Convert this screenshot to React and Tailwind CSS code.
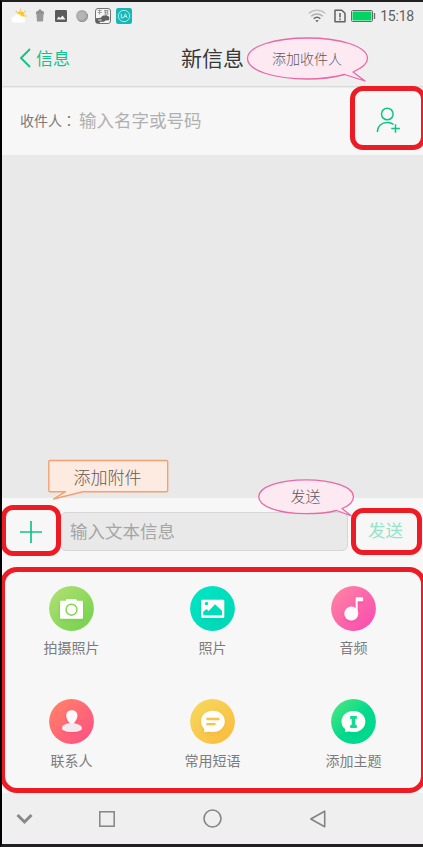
import React from "react";

function StatusBar() {
  return (
    <div className="flex h-[28px] items-center justify-between pl-[9px] pr-[9px]">
      <div className="flex items-center">
        <svg className="h-4 w-4" viewBox="0 0 16 16">
          <g stroke="#fbc02d" strokeWidth="1.2">
            <path d="M9.5 .8V2.6M4.8 3l1.1 1.1M14.5 3l-1.2 1.1M15.8 8h-1.5" />
          </g>
          <circle cx="9.8" cy="7" r="3.8" fill="#fcc62f" />
          <path d="M3.6 14.5a3 3 0 0 1-.4-6 4 4 0 0 1 7.3-.2 3.2 3.2 0 0 1 1.5 6.2z" fill="#fff" />
        </svg>
        <svg className="ml-[8px] h-[14px] w-[10px]" viewBox="0 0 10 14">
          <path d="M1 3.6a2 2 0 0 1 1.5-1.7h.8a1.7 1.7 0 0 1 3.4 0h.8A2 2 0 0 1 9 3.600v1.300H1z" fill="#909090" />
          <path d="M1.400 4.800h7.200L8 12.600H2z" fill="#999" />
        </svg>
        <svg className="ml-[10px] h-3 w-3" viewBox="0 0 12 12">
          <rect width="12" height="12" rx="1.2" fill="#5b5b5b" />
          <path d="M1.7 9.5l2-3 1.5 1.6 2.3-2.6 3 4z" fill="#f2f2f2" />
        </svg>
        <svg className="ml-[9px] h-3 w-3" viewBox="0 0 12 12">
          <circle cx="6" cy="6" r="5.9" fill="#a6a6a6" />
          <circle cx="5.3" cy="5.7" r="4" fill="#b5b5b5" />
          <path d="M11.4 4a5.7 5.7 0 0 1-8 7.1" fill="none" stroke="#909090" strokeWidth="1" />
        </svg>
        <svg className="ml-[7px] h-4 w-4" viewBox="0 0 16 16">
          <rect x=".5" y=".5" width="15" height="15" rx="2.5" fill="#f4f4f4" stroke="#727272" />
          <path d="M2.8 2.5h4M4.5 1.5v5M2.7 4.5h4.2M9 2.5h4.2M9.4 4.2h3.7M9.6 6.2h3.6M10.3 2.2v4M12.7 2.2v4" stroke="#8c8c8c" strokeWidth=".8" />
          <path d="M1 10.2l5-.5c1.5-3 5.8-3.2 8.300-.7l-.2 3.200-3.700.4-1.400 1.200H5.200L4.400 15H1z" fill="#606060" />
          <path d="M3.2 12h3.4" stroke="#eee" />
        </svg>
        <svg className="ml-[5px] h-4 w-4" viewBox="0 0 16 16">
          <rect width="16" height="16" rx="2.2" fill="#18b7b7" />
          <circle cx="8" cy="8" r="5.7" fill="none" stroke="#bcecec" strokeWidth=".9" />
          <path d="M5.3 5.8v4h2.3l1.8-4 1.7 4M8.5 8.6h2" fill="none" stroke="#d4f4f4" strokeWidth=".9" />
        </svg>
      </div>
      <div className="flex items-center">
        <svg className="h-[14px] w-[18px]" viewBox="0 0 18 14" fill="none">
          <path d="M.6 4.6C5.4.2 12.6.2 17.4 4.6" stroke="#c3c3c3" strokeWidth="1.4" />
          <path d="M3.200 7.300c3.300-3 8.300-3 11.600 0" stroke="#b0b0b0" strokeWidth="1.400" />
          <path d="M5.700 9.800c1.900-1.700 4.700-1.700 6.600 0" stroke="#686868" strokeWidth="1.400" />
          <path d="M7.300 11.300h3.400L9 13.200z" fill="#555" />
        </svg>
        <svg className="ml-[8px] h-[14px] w-[12px]" viewBox="0 0 12 14" fill="none">
          <path d="M1 1.200h6.800L11 4.300v8.500H1z" stroke="#626262" strokeWidth="1.500" strokeLinejoin="round" />
          <path d="M6 4v4.400M6 9.500v1.700" stroke="#626262" strokeWidth="1.500" />
        </svg>
        <svg className="ml-[5px] h-[12px] w-[25px]" viewBox="0 0 25 12">
          <rect x=".5" y=".5" width="21" height="11" rx="1" fill="#f1f1f1" stroke="#696969" strokeWidth="1" />
          <rect x="1.500" y="1.500" width="19" height="9" fill="#00d563" />
          <path d="M23.500 3v6" stroke="#696969" strokeWidth="1.300" />
        </svg>
        <span className="ml-[4px] font-[Roboto,sans-serif] text-[14px] leading-none tracking-[-0.2px] text-[#606060]">15:18</span>
      </div>
    </div>
  );
}

function Disc({ id, from, to, children }) {
  return (
    <svg className="h-[45px] w-[45px]" viewBox="0 0 45 45">
      <defs>
        <linearGradient id={id} x1="0.1" y1="0.1" x2="0.9" y2="0.9">
          <stop stopColor={from} />
          <stop offset={id === "subject" ? "0.55" : "1"} stopColor={to} />
        </linearGradient>
        <filter id={id + "-shadow"} x="-20%" y="-20%" width="140%" height="150%">
          <feDropShadow dx="0" dy="1" stdDeviation=".8" floodColor={to} floodOpacity="1" />
          <feDropShadow dx="0" dy="1" stdDeviation=".8" floodColor="#000" floodOpacity=".1" />
        </filter>
      </defs>
      <circle cx="22.5" cy="22.5" r="22.4" fill={`url(#${id})`} />
      <g filter={`url(#${id}-shadow)`}>{children}</g>
    </svg>
  );
}

const actions = [
  {
    label: "拍摄照片", id: "camera", from: "#addf70", to: "#76d34f",
    icon: (
      <>
        <path d="M12 14.800h4.800l.8-1.800h9.500l.8 1.800h5.100q1 0 1 1v16q0 1-1 1H12q-1 0-1-1v-16q0-1 1-1z" fill="#fffffa" />
        <circle cx="22.500" cy="23.700" r="5.500" fill="none" stroke="#7fd454" strokeWidth="1.400" />
      </>
    ),
  },
  {
    label: "照片", id: "photo", from: "#00e5c3", to: "#00d8b7",
    icon: (
      <>
        <rect x="11" y="13.800" width="23.200" height="18" rx="1" fill="#fffffa" />
        <circle cx="16.500" cy="17.500" r="1.700" fill="#00dcbc" />
        <path d="M13.200 29.300v-3.500l3.300-2.800 2.200 2 6.300-6.700 7 6.500v4.500z" fill="#00dcbc" />
      </>
    ),
  },
  {
    label: "音频", id: "audio", from: "#ff81a3", to: "#f94eb0",
    icon: (
      <>
        <circle cx="20.300" cy="27.600" r="7" fill="#fffafc" />
        <path d="M24.700 27V12.300q0-1 1-1h5.600q.8 0 .8.800v2.300q0 .8-.8.800h-4.700V28z" fill="#fffafc" />
      </>
    ),
  },
  {
    label: "联系人", id: "contact", from: "#ff8068", to: "#ff5283",
    icon: (
      <>
        <path d="M19 24.500c1.500-.7 5.500-.7 7 0 2.500.6 7 1.600 7 4.700 0 5.100-20 5.100-20 0 0-3.100 3.500-4.100 6-4.700z" fill="#f4e9ec" />
        <path d="M22.800 11.300c6.500 0 6.500 6.300 4 10.300-1.500 2.400-2.500 3.300-4 3.300s-2.500-.9-4-3.300c-2.500-4-2.500-10.300 4-10.300z" fill="#fffafa" />
      </>
    ),
  },
  {
    label: "常用短语", id: "phrase", from: "#f5d75d", to: "#fbbd3e",
    icon: (
      <>
        <path d="M22.800 11.800c6.800 0 12 4.500 12 10.500s-5.200 10.800-12 10.800q-2 0-4-.6l-4.800.7.400-3.200C12.100 28 11 25.500 11 22.300c0-6 5-10.500 11.800-10.500z" fill="#fffefa" />
        <path d="M17.300 20h11.300M17.300 25.200h7.300" stroke="#f8c34a" strokeWidth="2.300" strokeLinecap="round" />
      </>
    ),
  },
  {
    label: "添加主题", id: "subject", from: "#46e67f", to: "#00d98e",
    icon: (
      <>
        <path d="M22.400 12c6.800 0 11.900 4.500 11.900 10.400s-5.100 10.600-11.900 10.600q-2.500 0-4.500-.7l-4 .6.400-3C11.800 28 10.600 25.500 10.600 22.400c0-5.900 5-10.400 11.800-10.400z" fill="#fafffb" />
        <path d="M19.200 16.900h6.600v3h-1.500v6.200h1.500v3h-6.600v-3h1.500v-6.200h-1.500z" fill="#13da92" />
      </>
    ),
  },
];

function Highlight({ className }) {
  return <div className={"pointer-events-none absolute border-[5px] border-[#ed1c24] " + className} />;
}

function OvalCallout({ className, width, height, path, children, labelClass }) {
  return (
    <div className={"absolute " + className}>
      <svg className="absolute left-0 top-0" width={width} height={height} viewBox={`0 0 ${width} ${height}`}>
        <path d={path} fill="#fce9f2" stroke="#e968a5" strokeWidth="1.300" strokeLinejoin="round" />
      </svg>
      <span className={"relative flex items-center justify-center font-light text-[#5f565b] " + labelClass}>{children}</span>
    </div>
  );
}

export default function App() {
  return (
    <div className="relative flex h-[847px] w-[423px] flex-col overflow-hidden border-b-[3px] border-l-2 border-t-2 border-b-[#211f21] border-l-black border-t-[#211f21] bg-[#efefef] font-['Noto_Sans_CJK_SC',sans-serif]">
      <StatusBar />
      <header className="grid h-[57px] shrink-0 grid-cols-3 items-center border-b border-[#dadada] pb-px">
        <button className="flex items-center pl-[17px] text-[17px] leading-6 text-[#10c489]">
          <svg className="mr-[5px] h-[20px] w-[12px]" viewBox="0 0 12 20" fill="none">
            <path d="M11 1L2 10l9 9" stroke="#10c489" strokeWidth="1.900" />
          </svg>
          信息
        </button>
        <h1 className="whitespace-nowrap pb-px text-center text-[21px] leading-7 text-[#383838]">新信息</h1>
      </header>
      <section className="flex h-[68px] shrink-0 items-center border-t border-[#ebebeb] bg-[#f7f7f7] pb-[3px] pl-[18px]">
        <span className="flex w-[59px] whitespace-nowrap text-[14px] text-[#7a7a7a]">
          收件人<span className="font-['Noto_Sans_CJK_TC',sans-serif]" lang="zh-TW">：</span>
        </span>
        <span className="flex-1 text-[17.500px] text-[#b0b0b0]">输入名字或号码</span>
        <svg className="mr-[23px] h-[28px] w-[26px]" viewBox="0 0 26 28" fill="none" stroke="#10c489" strokeWidth="1.500">
          <circle cx="13.300" cy="8" r="5.800" />
          <path d="M3.300 26c.2-5.800 4.200-9.600 10-9.600 2.800 0 4.700.8 6.200 2M21.500 18.300v8.500M17.300 22.500h8.600" />
        </svg>
      </section>
      <main className="min-h-0 flex-1 bg-[#e9e9e9]" />
      <section className="flex h-[68px] shrink-0 items-center bg-[#f7f7f7] pb-px">
        <div className="flex w-[58px] justify-center">
          <svg className="h-[24px] w-[24px]" viewBox="0 0 24 24"><path d="M12 1v22M1 12h22" stroke="#10c489" strokeWidth="1.700" /></svg>
        </div>
        <div className="flex h-[39px] w-[288px] items-center rounded-[6px] border border-[#d6d6d6] bg-[#e9e9e9] pb-px pl-[9px] text-[17.500px] text-[#a5a5a5]">输入文本信息</div>
        <div className="flex-1 pb-[3px] text-center text-[17.500px] text-[#97e3c7]">发送</div>
      </section>
      <section className="-ml-px grid h-[227px] w-[424px] shrink-0 grid-cols-[141px_141px_141px] grid-rows-[113px_113px] bg-[#f7f7f7] pt-[20px]">
        {actions.map((a) => (
          <div key={a.id} className="flex flex-col items-center">
            <Disc id={a.id} from={a.from} to={a.to}>{a.icon}</Disc>
            <span className="mt-[6px] text-[14px] leading-[20px] text-[#7c7c7c]">{a.label}</span>
          </div>
        ))}
      </section>
      <nav className="flex h-[51px] shrink-0 items-center pl-[14px]">
        <svg className="h-[12px] w-[17px]" viewBox="0 0 17 12" fill="none"><path d="M1.500 2L8.500 9l7-7" stroke="#888" strokeWidth="3" /></svg>
        <svg className="ml-[66px] h-[16px] w-[16px]" viewBox="0 0 16 16"><rect x=".8" y=".8" width="14.400" height="14.400" fill="none" stroke="#848484" strokeWidth="1.500" /></svg>
        <svg className="ml-[88px] h-[19px] w-[19px]" viewBox="0 0 19 19"><circle cx="9.500" cy="9.500" r="8.500" fill="none" stroke="#848484" strokeWidth="1.600" /></svg>
        <svg className="ml-[87px] h-[18px] w-[17px]" viewBox="0 0 17 18"><path d="M15.700 1.200v15.600L1.800 9z" fill="none" stroke="#848484" strokeWidth="1.600" strokeLinejoin="round" /></svg>
      </nav>

      <OvalCallout
        className="left-[244px] top-[35px]" width={124} height={46}
        path="M98.500 37.500C86 40.800 74 42 61.500 42 28 42 1.500 33.500 1.500 21.500S28 1 61.500 1 121.500 9.500 121.500 21.500c0 5.200-6 9.700-14.500 13.500l12 9z"
        labelClass="h-[42px] w-[122px] text-[14px]"
      >添加收件人</OvalCallout>
      <OvalCallout
        className="left-[255px] top-[476px]" width={98} height={40}
        path="M79.500 32.500C70 35 59 35.700 49 35.700 22 35.700 1.700 28.500 1.700 18.700S22 1.800 49 1.800s47.500 7.500 47.500 16.900c0 4.600-4 8.800-11.500 11.800l9.500 7.500z"
        labelClass="h-[37px] w-[97px] text-[15px]"
      >发送</OvalCallout>
      <div className="absolute left-[45px] top-[457px] h-[43px] w-[123px]">
        <svg className="absolute left-0 top-0" width="123" height="44" viewBox="0 0 123 44">
          <path d="M3 1.500h116.500q1.200 0 1.200 1.200v28.800q0 1.200-1.200 1.200H36L6.500 40l12-7.300H3q-1.200 0-1.200-1.200V2.700Q1.800 1.500 3 1.500z" fill="#fdeae0" stroke="#f3a072" strokeWidth="1.400" strokeLinejoin="round" />
        </svg>
        <span className="relative flex h-[35px] items-center justify-center pr-[2px] text-[17px] font-light text-[#625a56]">添加附件</span>
      </div>

      <Highlight className="left-[348px] top-[84px] h-[64px] w-[76px] rounded-[13px]" />
      <Highlight className="-left-px top-[503px] h-[51px] w-[60px] rounded-[12px]" />
      <Highlight className="left-[349px] top-[506px] h-[47px] w-[71px] rounded-[12px]" />
      <Highlight className="-left-[2px] top-[565px] h-[226px] w-[426px] rounded-[17px]" />
    </div>
  );
}
